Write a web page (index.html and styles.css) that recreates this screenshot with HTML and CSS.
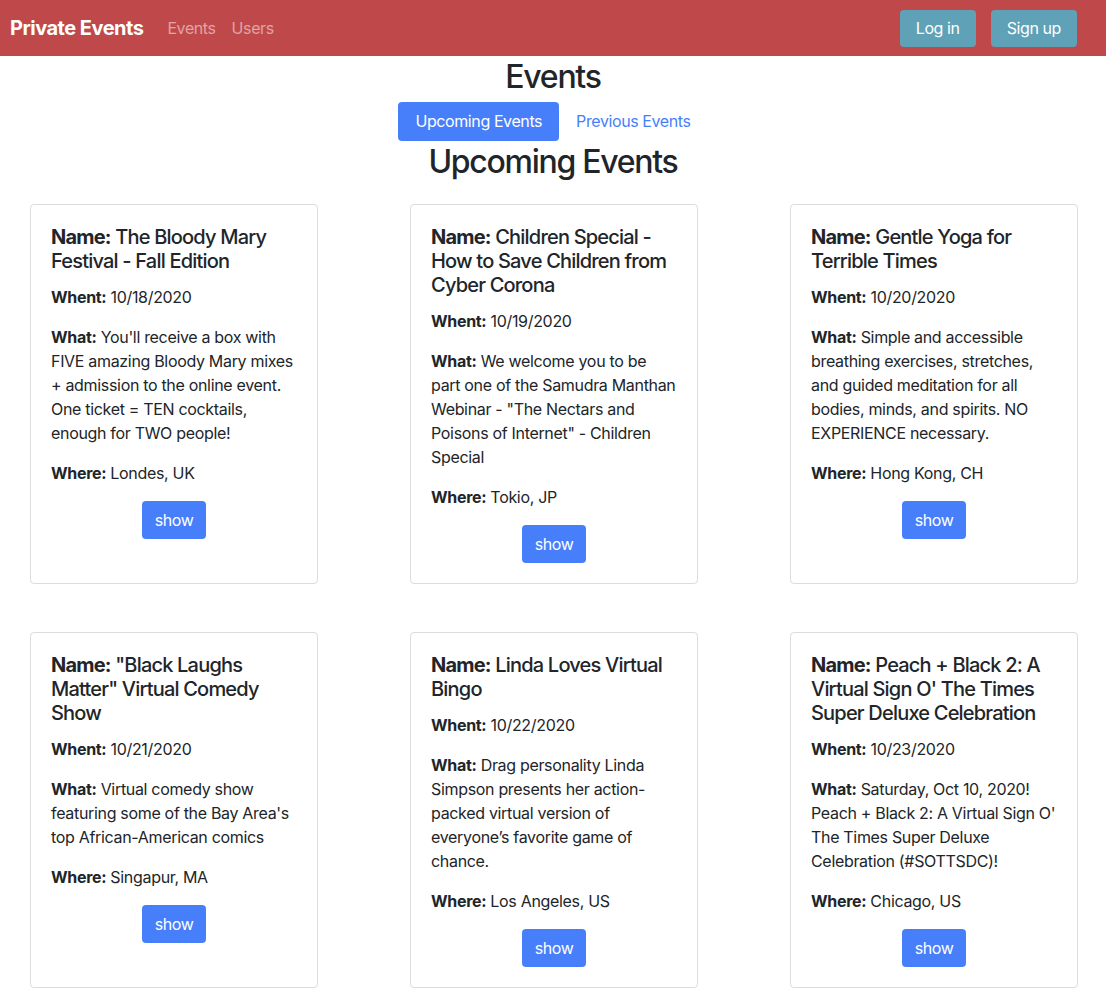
FILE: index.html
```html
<!DOCTYPE html>
<html lang="en">
<head>
<meta charset="utf-8">
<title>Private Events</title>
<link rel="stylesheet" href="styles.css">
</head>
<body>
<nav class="navbar">
  <div class="nav-left">
    <a class="brand" href="#">Private Events</a>
    <a class="nav-link" href="#">Events</a>
    <a class="nav-link" href="#">Users</a>
  </div>
  <div class="nav-right">
    <a class="btn btn-info" href="#">Log in</a>
    <a class="btn btn-info" href="#">Sign up</a>
  </div>
</nav>
<main class="main">
  <h2 class="page-title">Events</h2>
  <div class="tabs">
    <a class="tab active" href="#">Upcoming Events</a>
    <a class="tab" href="#">Previous Events</a>
  </div>
  <h1 class="section-title">Upcoming Events</h1>
  <div class="grid">
    <div class="card">
      <h5 class="card-title"><b>Name:</b> The Bloody Mary Festival - Fall Edition</h5>
      <p><b>Whent:</b> 10/18/2020</p>
      <p><b>What:</b> You'll receive a box with FIVE amazing Bloody Mary mixes + admission to the online event. One ticket = TEN cocktails, enough for TWO people!</p>
      <p><b>Where:</b> Londes, UK</p>
      <div class="actions"><a class="btn btn-primary" href="#">show</a></div>
    </div>
    <div class="card">
      <h5 class="card-title"><b>Name:</b> Children Special - How to Save Children from Cyber Corona</h5>
      <p><b>Whent:</b> 10/19/2020</p>
      <p><b>What:</b> We welcome you to be part one of the Samudra Manthan Webinar - "The Nectars and Poisons of Internet" - Children Special</p>
      <p><b>Where:</b> Tokio, JP</p>
      <div class="actions"><a class="btn btn-primary" href="#">show</a></div>
    </div>
    <div class="card">
      <h5 class="card-title"><b>Name:</b> Gentle Yoga for Terrible Times</h5>
      <p><b>Whent:</b> 10/20/2020</p>
      <p><b>What:</b> Simple and accessible breathing exercises, stretches, and guided meditation for all bodies, minds, and spirits. NO EXPERIENCE necessary.</p>
      <p><b>Where:</b> Hong Kong, CH</p>
      <div class="actions"><a class="btn btn-primary" href="#">show</a></div>
    </div>
    <div class="card">
      <h5 class="card-title"><b>Name:</b> "Black Laughs Matter" Virtual Comedy Show</h5>
      <p><b>Whent:</b> 10/21/2020</p>
      <p><b>What:</b> Virtual comedy show featuring some of the Bay Area's top African-American comics</p>
      <p><b>Where:</b> Singapur, MA</p>
      <div class="actions"><a class="btn btn-primary" href="#">show</a></div>
    </div>
    <div class="card">
      <h5 class="card-title"><b>Name:</b> Linda Loves Virtual Bingo</h5>
      <p><b>Whent:</b> 10/22/2020</p>
      <p><b>What:</b> Drag personality Linda Simpson presents her action-packed virtual version of everyone’s favorite game of chance.</p>
      <p><b>Where:</b> Los Angeles, US</p>
      <div class="actions"><a class="btn btn-primary" href="#">show</a></div>
    </div>
    <div class="card">
      <h5 class="card-title"><b>Name:</b> Peach + Black 2: A Virtual Sign O' The Times Super Deluxe Celebration</h5>
      <p><b>Whent:</b> 10/23/2020</p>
      <p><b>What:</b> Saturday, Oct 10, 2020! Peach + Black 2: A Virtual Sign O' The Times Super Deluxe Celebration (#SOTTSDC)!</p>
      <p><b>Where:</b> Chicago, US</p>
      <div class="actions"><a class="btn btn-primary" href="#">show</a></div>
    </div>
  </div>
</main>
</body>
</html>
```
FILE: styles.css
```css
* { box-sizing: border-box; }
html, body {
  margin: 0;
  padding: 0;
  background: #fff;
}
body {
  font-family: Inter, "Noto Sans", "DejaVu Sans", sans-serif;
  font-size: 16px;
  line-height: 1.5;
  color: #212529;
  letter-spacing: -0.02em;
}
a { text-decoration: none; }
b { font-weight: 700; }

.navbar {
  height: 56px;
  background: #bf494a;
  display: flex;
  align-items: center;
  justify-content: space-between;
  padding: 0 29px 0 10px;
}
.nav-left {
  display: flex;
  align-items: center;
}
.brand {
  color: #fff;
  font-size: 20px;
  font-weight: 700;
  margin-right: 24px;
  letter-spacing: -0.025em;
}
.nav-link {
  color: rgba(255, 255, 255, 0.5);
  margin-right: 16px;
  letter-spacing: -0.025em;
}
.nav-right {
  display: flex;
  gap: 15px;
}
.btn {
  display: inline-block;
  font-size: 16px;
  line-height: 24px;
  border-radius: 4px;
  color: #fff;
  text-align: center;
}
.btn-info {
  background: #5fa1b6;
  padding: 6px 16px 7px;
  letter-spacing: -0.025em;
}
.btn-primary {
  background: #477ffb;
  padding: 7px 13px;
  letter-spacing: -0.025em;
}

.main {
  display: flex;
  flex-direction: column;
  align-items: center;
}
.page-title {
  margin: 2px 0 6px;
  font-size: 32px;
  font-weight: 500;
  line-height: 38px;
  letter-spacing: -0.04em;
}
.tabs {
  display: flex;
  gap: 0;
}
.tab {
  display: block;
  padding: 7px 17px 8px;
  line-height: 24px;
  border-radius: 4px;
  color: #477ffb;
  letter-spacing: -0.025em;
}
.tab.active {
  background: #477ffb;
  color: #fff;
}
.section-title {
  margin: 2px 0 23px;
  font-size: 32px;
  font-weight: 500;
  line-height: 38px;
  letter-spacing: -0.04em;
}
.grid {
  align-self: stretch;
  display: grid;
  grid-template-columns: repeat(3, 288px);
  column-gap: 92px;
  row-gap: 48px;
  padding: 0 0 20px 30px;
}
.card {
  border: 1px solid #dcdcdc;
  border-radius: 4px;
  padding: 20px 20px 20px;
}
.card-title {
  margin: 0 0 12px;
  font-size: 20px;
  font-weight: 500;
  line-height: 24px;
  letter-spacing: -0.04em;
}
.card p {
  margin: 0 0 16px;
}
.actions {
  display: flex;
  justify-content: center;
}
```
